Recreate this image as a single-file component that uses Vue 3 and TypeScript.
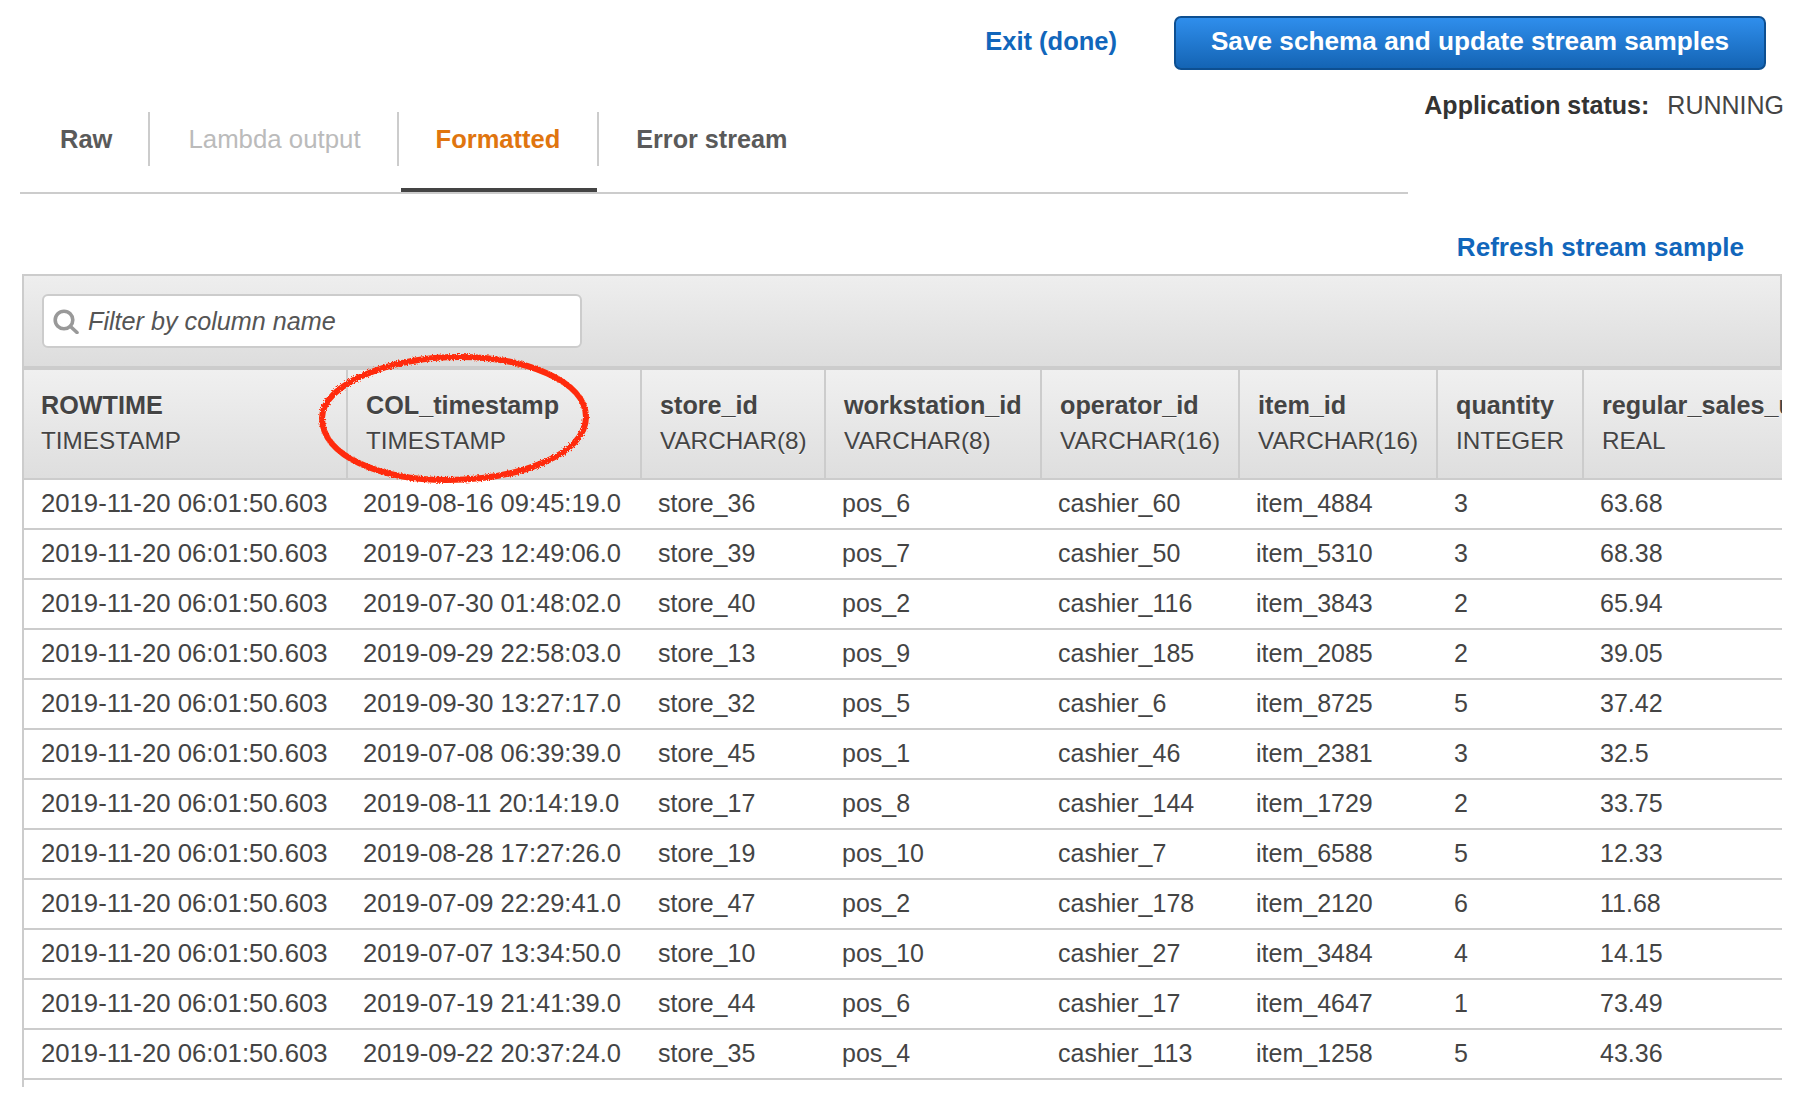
<script setup lang="ts">
interface Column {
  name: string
  type: string
  width: number
}

const columns: Column[] = [
  { name: 'ROWTIME', type: 'TIMESTAMP', width: 322 },
  { name: 'COL_timestamp', type: 'TIMESTAMP', width: 294 },
  { name: 'store_id', type: 'VARCHAR(8)', width: 184 },
  { name: 'workstation_id', type: 'VARCHAR(8)', width: 216 },
  { name: 'operator_id', type: 'VARCHAR(16)', width: 198 },
  { name: 'item_id', type: 'VARCHAR(16)', width: 198 },
  { name: 'quantity', type: 'INTEGER', width: 146 },
  { name: 'regular_sales_unit_price', type: 'REAL', width: 200 },
]

const rowtime = '2019-11-20 06:01:50.603'

const rows: string[][] = [
  ['2019-08-16 09:45:19.0', 'store_36', 'pos_6', 'cashier_60', 'item_4884', '3', '63.68'],
  ['2019-07-23 12:49:06.0', 'store_39', 'pos_7', 'cashier_50', 'item_5310', '3', '68.38'],
  ['2019-07-30 01:48:02.0', 'store_40', 'pos_2', 'cashier_116', 'item_3843', '2', '65.94'],
  ['2019-09-29 22:58:03.0', 'store_13', 'pos_9', 'cashier_185', 'item_2085', '2', '39.05'],
  ['2019-09-30 13:27:17.0', 'store_32', 'pos_5', 'cashier_6', 'item_8725', '5', '37.42'],
  ['2019-07-08 06:39:39.0', 'store_45', 'pos_1', 'cashier_46', 'item_2381', '3', '32.5'],
  ['2019-08-11 20:14:19.0', 'store_17', 'pos_8', 'cashier_144', 'item_1729', '2', '33.75'],
  ['2019-08-28 17:27:26.0', 'store_19', 'pos_10', 'cashier_7', 'item_6588', '5', '12.33'],
  ['2019-07-09 22:29:41.0', 'store_47', 'pos_2', 'cashier_178', 'item_2120', '6', '11.68'],
  ['2019-07-07 13:34:50.0', 'store_10', 'pos_10', 'cashier_27', 'item_3484', '4', '14.15'],
  ['2019-07-19 21:41:39.0', 'store_44', 'pos_6', 'cashier_17', 'item_4647', '1', '73.49'],
  ['2019-09-22 20:37:24.0', 'store_35', 'pos_4', 'cashier_113', 'item_1258', '5', '43.36'],
]

const tabs = [
  { label: 'Raw', state: '' },
  { label: 'Lambda output', state: 'disabled' },
  { label: 'Formatted', state: 'active' },
  { label: 'Error stream', state: '' },
]
</script>

<template>
  <div class="page">
    <header class="actions">
      <a class="link exit">Exit (done)</a>
      <button class="save">Save schema and update stream samples</button>
    </header>

    <div class="head">
      <ul class="tabs">
        <li v-for="tab in tabs" :key="tab.label" class="tab" :class="tab.state">
          <span class="tab-label">{{ tab.label }}</span>
          <i class="tab-bar"></i>
        </li>
      </ul>
      <p class="status"><b>Application status:</b><span>RUNNING</span></p>
    </div>

    <div class="refresh"><a class="link">Refresh stream sample</a></div>

    <section class="panel">
      <div class="toolbar">
        <label class="filter">
          <svg class="filter-icon" width="26" height="25" viewBox="0 0 26 25" fill="none" stroke="#999" stroke-width="3.6">
            <circle cx="11" cy="11" r="8.8" />
            <path d="M17.5 17.5 L24 23.5" stroke-linecap="round" />
          </svg>
          <input type="text" placeholder="Filter by column name" />
        </label>
      </div>
      <div class="table-wrap">
        <table>
          <colgroup>
            <col v-for="col in columns" :key="col.name" :style="{ width: col.width + 'px' }" />
          </colgroup>
          <thead>
            <tr>
              <th v-for="col in columns" :key="col.name">
                <div class="col-name">{{ col.name }}</div>
                <div class="col-type">{{ col.type }}</div>
              </th>
            </tr>
          </thead>
          <tbody>
            <tr v-for="(row, i) in rows" :key="i">
              <td>{{ rowtime }}</td>
              <td v-for="(cell, j) in row" :key="j">{{ cell }}</td>
            </tr>
          </tbody>
        </table>
      </div>
    </section>

    <svg class="circle" width="290" height="145" viewBox="0 0 290 145" fill="none">
      <defs>
        <filter id="rough" x="-5%" y="-5%" width="110%" height="110%">
          <feTurbulence type="fractalNoise" baseFrequency="0.7" numOctaves="2" seed="4" />
          <feDisplacementMap in="SourceGraphic" scale="4" />
        </filter>
      </defs>
      <path
        d="M150 11 C215 11 276 35 276 71 C276 108 210 134 137 134 C70 134 12 110 12 72 C12 38 80 11 150 11 Z"
        stroke="#ff2c08"
        stroke-width="6"
        filter="url(#rough)"
      />
    </svg>
  </div>
</template>

<style>
html,
body {
  background: #fff;
}
</style>

<style scoped>
.page {
  position: relative;
  width: 1800px;
  height: 1106px;
  overflow: hidden;
  font-family: 'Liberation Sans', Arial, sans-serif;
  font-size: 25.5px;
  color: #444;
}

.actions {
  display: flex;
  justify-content: flex-end;
  align-items: center;
  gap: 57px;
  padding: 16px 34px 0 0;
}

.link {
  font-weight: 700;
  color: #1166bb;
}

.exit {
  padding-bottom: 4px;
}

.save {
  width: 592px;
  height: 54px;
  padding: 0 0 4px;
  border: 2px solid #0d4f91;
  border-radius: 7px;
  background: linear-gradient(#2f8eec, #1464b4);
  color: #fff;
  font: 700 26.2px 'Liberation Sans', Arial, sans-serif;
}

.head {
  display: flex;
  justify-content: space-between;
  align-items: flex-start;
}

.tabs {
  display: flex;
  width: 1388px;
  height: 124px;
  margin: 0 0 0 20px;
  padding: 42px 0 0;
  box-sizing: border-box;
  list-style: none;
  border-bottom: 2px solid #ccc;
}

.tab {
  display: flex;
  flex-direction: column;
  font-weight: 700;
  color: #5a5a5a;
}

.tab-label {
  height: 54px;
  padding: 0 36px 0 40px;
  line-height: 54px;
  border-right: 2px solid #ccc;
}

.tab + .tab .tab-label {
  padding: 0 36px 0 38px;
}

.tab.active .tab-label {
  padding: 0 37px 0 37px;
}

.tab:last-child .tab-label {
  border-right: 0;
  padding-left: 37px;
  font-size: 25.2px;
}

.tab-bar {
  display: block;
  height: 4px;
  margin: 22px 2px 0;
}

.tab.disabled {
  color: #bbb;
  font-weight: 400;
  font-size: 25.8px;
}

.tab.active {
  color: #e0750f;
}

.tab.active .tab-bar {
  background: #444;
}

.status {
  margin: 21px 16px 0 0;
  font-size: 25px;
  white-space: nowrap;
  color: #333;
}

.status span {
  margin-left: 18px;
  color: #444;
}

.refresh {
  display: flex;
  justify-content: flex-end;
  height: 30px;
  padding: 38px 56px 12px 0;
  font-size: 26.1px;
}

.panel {
  width: 1760px;
  margin-left: 22px;
}

.toolbar {
  height: 72px;
  padding-top: 18px;
  border: 2px solid #ccc;
  border-bottom: 4px solid #ccc;
  background: linear-gradient(#eee, #ddd);
}

.filter {
  display: flex;
  align-items: center;
  gap: 9px;
  width: 540px;
  height: 54px;
  margin-left: 18px;
  padding-left: 9px;
  box-sizing: border-box;
  background: #fff;
  border: 2px solid #ccc;
  border-radius: 6px;
}

.filter input {
  flex: 1;
  min-width: 0;
  border: 0;
  outline: 0;
  padding: 0;
  background: transparent;
  font: italic 25.2px 'Liberation Sans', Arial, sans-serif;
}

.filter input::placeholder {
  color: #555;
  opacity: 1;
}

.table-wrap {
  padding-bottom: 7px;
  border-left: 2px solid #ccc;
  overflow: hidden;
}

table {
  width: 1758px;
  border-collapse: separate;
  border-spacing: 0;
  table-layout: fixed;
}

th {
  height: 110px;
  padding: 0 0 2px 18px;
  box-sizing: border-box;
  border-left: 2px solid #ccc;
  border-bottom: 2px solid #ccc;
  background: linear-gradient(#f0f0f0, #dedede);
  font-weight: 400;
  text-align: left;
  white-space: nowrap;
  overflow: hidden;
  text-shadow: 0 1px 0 rgba(255, 255, 255, 0.6);
}

th:first-child {
  border-left: 0;
  padding-left: 17px;
}

.col-name {
  font-size: 25.2px;
  font-weight: 700;
  line-height: 36px;
}

.col-type {
  font-size: 24.3px;
  line-height: 36px;
}

td {
  height: 50px;
  padding: 0 0 2px 18px;
  box-sizing: border-box;
  border-bottom: 2px solid #ccc;
  font-size: 25px;
  white-space: nowrap;
  overflow: hidden;
}

td:nth-child(1) {
  padding-left: 17px;
  font-size: 25.7px;
}

td:nth-child(2) {
  padding-left: 17px;
  font-size: 25.5px;
}

.circle {
  position: absolute;
  left: 310px;
  top: 346px;
}
</style>
